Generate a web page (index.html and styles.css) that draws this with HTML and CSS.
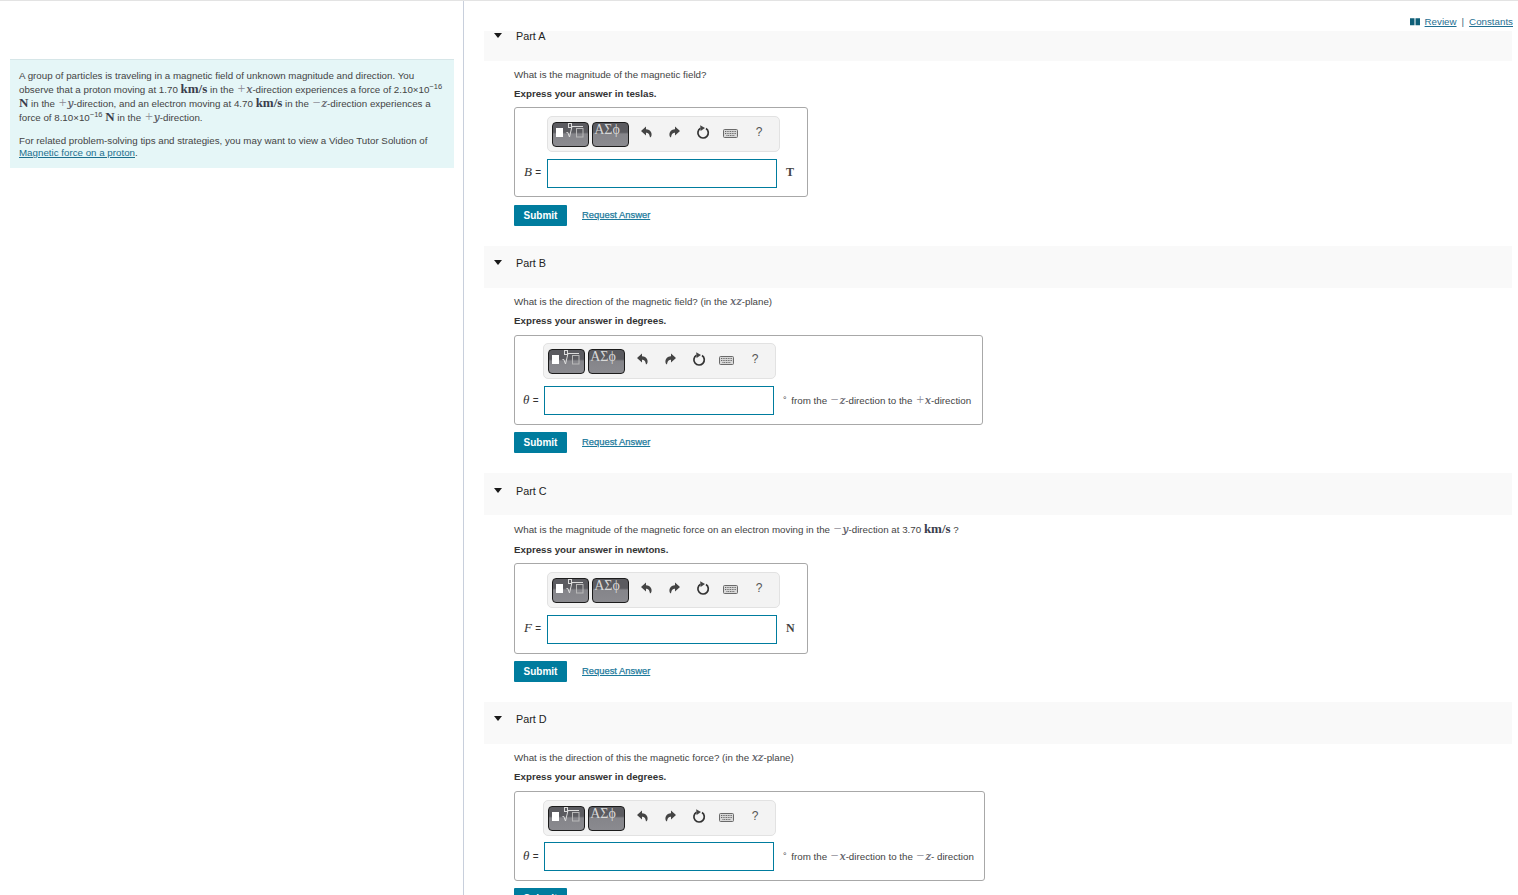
FILE: index.html
```html
<!DOCTYPE html>
<html lang="en">
<head>
<meta charset="utf-8">
<title>Magnetic force problem</title>
<link rel="stylesheet" href="styles.css">
</head>
<body>
<svg class="defs" width="0" height="0" aria-hidden="true">
  <symbol id="i-undo" viewBox="0 0 11 12"><path d="M5 .5 0 5l5 4.500V6.800c2 0 3.500 1 4 4.700 1.800-.6 2-3.400 1.100-5.200C9.200 4.400 7.200 3.300 5 3.200z"/></symbol>
  <symbol id="i-redo" viewBox="0 0 11 12"><path d="M6 .5 11 5 6 9.500V6.800c-2 0-3.500 1-4 4.700C.2 10.900 0 8.100.9 6.300 1.800 4.400 3.800 3.300 6 3.200z"/></symbol>
  <symbol id="i-reset" viewBox="0 0 14 14"><path class="ring" d="M4.500 3.300A5.200 5.200 0 1 0 10 3.500"/><path d="M4.200.3 9 2.900 4.600 5.900z"/></symbol>
  <symbol id="i-keys" viewBox="0 0 15 9"><rect class="kbd" x=".5" y=".5" width="14" height="8" rx="1"/><path class="keys" d="M2 2.500h11M2 4.500h11M3.500 6.500h8"/></symbol>
  <symbol id="i-tmpl" viewBox="0 0 35 23"><rect class="t-fill" x="3" y="5" width="7" height="9"/><rect class="t-line" x="15.500" y=".5" width="3" height="4"/><path class="t-line" d="M13.500 9.500h1.300l1.700 4.500 2.500-10.500h11"/><rect class="t-box" x="23.500" y="5.500" width="6.500" height="8.500"/></symbol>
</svg>
<div class="page">
  <aside class="left">
    <div class="intro">
      <p>A group of particles is traveling in a magnetic field of unknown magnitude and direction. You observe that a proton moving at 1.70 <b class="u">km/s</b> in the <span class="op">+</span><i class="v">x</i>-direction experiences a force of 2.10×10<sup>−16</sup> <b class="u">N</b> in the <span class="op">+</span><i class="v">y</i>-direction, and an electron moving at 4.70 <b class="u">km/s</b> in the <span class="op">−</span><i class="v">z</i>-direction experiences a force of 8.10×10<sup>−16</sup> <b class="u">N</b> in the <span class="op">+</span><i class="v">y</i>-direction.</p>
      <p class="tip">For related problem-solving tips and strategies, you may want to view a Video Tutor Solution of <a href="#">Magnetic force on a proton</a>.</p>
    </div>
  </aside>
  <main class="right">
    <div class="toplinks"><svg class="book" viewBox="0 0 10 7"><path d="M0 0h4.500v7H0zM5.500 0H10v7H5.500z"/></svg><a href="#">Review</a><span class="bar">|</span><a href="#">Constants</a></div>

    <section class="part part-a">
      <h2 class="head head-a"><span class="caret"></span>Part A</h2>
      <div class="body">
        <p class="q">What is the magnitude of the magnetic field?</p>
        <p class="x">Express your answer in teslas.</p>
        <div class="box box-short">
          <div class="tools">
            <span class="mq"><svg class="tmpl"><use href="#i-tmpl"/></svg></span><span class="mq sym">ΑΣϕ</span>
            <svg class="ic i-u"><use href="#i-undo"/></svg><svg class="ic i-r"><use href="#i-redo"/></svg><svg class="ic i-c"><use href="#i-reset"/></svg><svg class="ic i-k"><use href="#i-keys"/></svg><span class="help">?</span>
          </div>
          <div class="row row-in">
            <label class="lab"><i>B</i> <span>=</span></label><span class="inp"></span><span class="unit">T</span>
          </div>
        </div>
        <div class="acts"><button class="sub" type="button">Submit</button><a class="req" href="#">Request Answer</a></div>
      </div>
    </section>

    <section class="part">
      <h2 class="head"><span class="caret"></span>Part B</h2>
      <div class="body">
        <p class="q">What is the direction of the magnetic field? (in the <i class="v">xz</i>-plane)</p>
        <p class="x">Express your answer in degrees.</p>
        <div class="box box-b">
          <div class="tools">
            <span class="mq"><svg class="tmpl"><use href="#i-tmpl"/></svg></span><span class="mq sym">ΑΣϕ</span>
            <svg class="ic i-u"><use href="#i-undo"/></svg><svg class="ic i-r"><use href="#i-redo"/></svg><svg class="ic i-c"><use href="#i-reset"/></svg><svg class="ic i-k"><use href="#i-keys"/></svg><span class="help">?</span>
          </div>
          <div class="row">
            <label class="lab"><i>θ</i> <span>=</span></label><span class="inp"></span><span class="deg"><sup>°</sup> from the <span class="op">−</span><i class="v">z</i>-direction to the <span class="op">+</span><i class="v">x</i>-direction</span>
          </div>
        </div>
        <div class="acts"><button class="sub" type="button">Submit</button><a class="req" href="#">Request Answer</a></div>
      </div>
    </section>

    <section class="part part-c">
      <h2 class="head"><span class="caret"></span>Part C</h2>
      <div class="body">
        <p class="q">What is the magnitude of the magnetic force on an electron moving in the <span class="op">−</span><i class="v">y</i>-direction at 3.70 <b class="u">km/s</b> ?</p>
        <p class="x">Express your answer in newtons.</p>
        <div class="box box-short box-c">
          <div class="tools">
            <span class="mq"><svg class="tmpl"><use href="#i-tmpl"/></svg></span><span class="mq sym">ΑΣϕ</span>
            <svg class="ic i-u"><use href="#i-undo"/></svg><svg class="ic i-r"><use href="#i-redo"/></svg><svg class="ic i-c"><use href="#i-reset"/></svg><svg class="ic i-k"><use href="#i-keys"/></svg><span class="help">?</span>
          </div>
          <div class="row row-in">
            <label class="lab"><i>F</i> <span>=</span></label><span class="inp"></span><span class="unit">N</span>
          </div>
        </div>
        <div class="acts"><button class="sub" type="button">Submit</button><a class="req" href="#">Request Answer</a></div>
      </div>
    </section>

    <section class="part part-d">
      <h2 class="head"><span class="caret"></span>Part D</h2>
      <div class="body">
        <p class="q">What is the direction of this the magnetic force? (in the <i class="v">xz</i>-plane)</p>
        <p class="x">Express your answer in degrees.</p>
        <div class="box box-d">
          <div class="tools">
            <span class="mq"><svg class="tmpl"><use href="#i-tmpl"/></svg></span><span class="mq sym">ΑΣϕ</span>
            <svg class="ic i-u"><use href="#i-undo"/></svg><svg class="ic i-r"><use href="#i-redo"/></svg><svg class="ic i-c"><use href="#i-reset"/></svg><svg class="ic i-k"><use href="#i-keys"/></svg><span class="help">?</span>
          </div>
          <div class="row">
            <label class="lab"><i>θ</i> <span>=</span></label><span class="inp"></span><span class="deg"><sup>°</sup> from the <span class="op">−</span><i class="v">x</i>-direction to the <span class="op">−</span><i class="v">z</i>- direction</span>
          </div>
        </div>
        <div class="acts"><button class="sub" type="button">Submit</button></div>
      </div>
    </section>
  </main>
</div>
</body>
</html>
```

FILE: styles.css
```css
* { box-sizing: border-box; }
html, body { margin: 0; height: 100%; overflow: hidden; }
body {
  background: #fff;
  color: #333;
  font-family: "Liberation Sans", Arial, sans-serif;
  font-size: 9.75px;
  line-height: 14px;
}
.defs { position: absolute; }
p { margin: 0; }
a { color: #007c9e; text-decoration: underline; }

.page {
  display: flex;
  height: 895px;
  border-top: 1px solid #e3e3e3;
}
.left {
  flex: none;
  width: 464px;
  padding: 58px 9px 0 10px;
  border-right: 1px solid #c8cfdc;
}
.intro {
  height: 109px;
  padding: 9px 9px 0;
  background: #e5f6f7;
  border-top: 1px solid #d6e6e8;
  color: #444;
}
.intro .tip { margin-top: 10px; line-height: 12px; }
.intro a { color: #1c6f8e; }
.intro sup { font-size: 7.500px; line-height: 0; vertical-align: 4px; }
.deg sup { font-size: 9px; line-height: 0; vertical-align: 1px; margin-right: 2px; }
.u { font-family: "Liberation Serif", serif; font-size: 13px; line-height: 0; font-weight: 700; color: #3a3d4c; }
.v { font-family: "DejaVu Serif", serif; font-size: 10.500px; line-height: 0; font-weight: 400; font-style: italic; color: #55555f; -webkit-text-stroke: .2px #55555f; }
.op { font-family: "Liberation Serif", serif; font-size: 14px; line-height: 0; color: #8a8a94; padding: 0 1px; }

.right { flex: 1; padding: 0 6px 0 20px; min-width: 0; }
.toplinks {
  height: 30px;
  margin-right: -1px;
  display: flex;
  justify-content: flex-end;
  align-items: flex-start;
  padding-top: 14px;
  color: #2c5f78;
}
.toplinks a { color: #1f6f92; }
.book { width: 10px; height: 7.500px; margin: 3px 5px 0 0; fill: #0f5f78; }
.bar { margin: 0 5px; }

.part { margin-bottom: 20px; }
.head {
  margin: 0;
  height: 42px;
  padding-top: 10px;
  display: flex;
  align-items: flex-start;
  background: #f9f9f9;
  color: #222;
  font-size: 10.800px;
  font-weight: 400;
  line-height: 14px;
}
.head-a { height: 30px; padding-top: 0; line-height: 10px; }
.head-a .caret { margin-top: 2px; }
.part-c .head { padding-top: 11px; }
.caret {
  width: 0; height: 0;
  margin: 4px 14px 0 10px;
  border-left: 4.500px solid transparent;
  border-right: 4.500px solid transparent;
  border-top: 5px solid #1a1a1a;
}
.body { padding-left: 30px; }
.q { padding-top: 7px; height: 20px; color: #444; }
.x { margin-top: 6px; font-weight: 700; color: #333; }
.part-c .q { padding-top: 8px; height: 21px; }
.part-c .x { margin-top: 7px; }

.box {
  margin-top: 7px;
  height: 90px;
  padding: 7px 0 0 28px;
  border: 1px solid #a8a8a8;
  border-radius: 3px;
}
.part-a .box { margin-top: 6px; }
.part-c .box { margin-top: 6px; }
.box-short { width: 294px; padding: 8px 0 0 32px; }
.box-c { height: 91px; }
.box-b { width: 469px; }
.box-d { width: 471px; padding-top: 8px; }
.tools {
  display: flex;
  align-items: center;
  width: 233px;
  height: 36px;
  padding-left: 4px;
  background: #f3f3f3;
  border: 1px solid #e2e2e2;
  border-radius: 5px;
}
.mq {
  flex: none;
  width: 37px;
  height: 25px;
  margin-right: 3px;
  border: 1px solid #1c1c1c;
  border-radius: 4px;
  background: linear-gradient(#5b5b60 0, #5b5b60 40%, #85858a 48%, #8a8a8f 100%);
  color: #d8d8d8;
}
.sym {
  padding-right: 7px;
  font-family: "Liberation Serif", "DejaVu Serif", serif;
  font-size: 14px;
  line-height: 14px;
  text-align: center;
}
.tmpl { display: block; width: 35px; height: 23px; }
.t-fill { fill: #fff; }
.t-line { fill: none; stroke: #dcdcdc; stroke-width: 1; }
.t-box { fill: none; stroke: #b8b8b8; stroke-width: 1; }
.ic { flex: none; fill: #444; margin-bottom: 5px; }
.i-u { width: 11px; height: 12px; margin-left: 8.500px; }
.i-r { width: 11px; height: 12px; margin-left: 17.500px; }
.i-c { width: 14px; height: 14px; margin-left: 15.700px; }
.i-k { width: 15px; height: 9px; margin-left: 13.500px; margin-bottom: 1px; }
.ring { fill: none; stroke: #333; stroke-width: 1.700; }
.kbd { fill: #d8d8d8; stroke: #6a6a6a; }
.keys { fill: none; stroke: #666; stroke-dasharray: 1 .7; }
.help { margin-left: 17.500px; margin-bottom: 5px; font-size: 12px; color: #555; }

.row { display: flex; align-items: center; margin-top: 7px; margin-left: -20px; }
.part-d .row { margin-top: 6px; }
.row-in { margin-left: -24px; }
.lab {
  width: 21px;
  font-family: "Liberation Serif", serif;
  font-size: 13px;
  color: #333;
  white-space: nowrap;
}
.lab span { font-family: "Liberation Sans", sans-serif; font-size: 10px; }
.row-in .lab { width: 24px; padding-left: 1px; margin-bottom: 2px; }
.inp {
  flex: none;
  width: 230px;
  height: 29px;
  background: #fff;
  border: 1px solid #007c9e;
}
.unit { margin-left: 9px; margin-bottom: 3px; font-family: "Liberation Serif", serif; font-size: 12px; font-weight: 700; color: #444; }
.deg { margin-left: 9px; color: #444; white-space: nowrap; }

.acts { display: flex; align-items: center; margin-top: 7px; }
.part-a .acts { margin-top: 8px; }
.part-d .acts { margin-top: 7px; }
.sub {
  width: 53px;
  height: 21px;
  padding: 0;
  border: 0;
  border-radius: 1px;
  background: #007c9e;
  color: #fff;
  font: 700 10px "Liberation Sans", sans-serif;
}
.req { margin-left: 15px; margin-bottom: 2px; font-size: 9.400px; color: #1c7a9c; -webkit-text-stroke: .25px #1c7a9c; }
```
